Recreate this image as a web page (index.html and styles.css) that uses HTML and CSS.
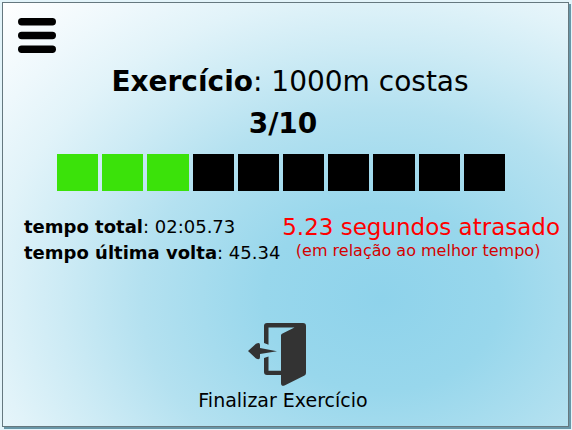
FILE: index.html
```html
<!DOCTYPE html>
<html lang="pt">
<head>
<meta charset="utf-8">
<meta name="viewport" content="width=device-width, initial-scale=1">
<title>Exercício</title>
<link rel="stylesheet" href="styles.css">
</head>
<body>
<main class="screen">
  <header class="toolbar">
    <button class="menu" type="button" aria-label="Menu">
      <svg width="38" height="35" viewBox="0 0 38 35" aria-hidden="true">
        <rect width="38" height="7.4" rx="3.7"/>
        <rect y="13.8" width="38" height="7.4" rx="3.7"/>
        <rect y="27.6" width="38" height="7.4" rx="3.7"/>
      </svg>
    </button>
  </header>
  <h1 class="title"><strong>Exercício</strong>: 1000m costas</h1>
  <p class="count">3/10</p>
  <div class="laps">
    <span class="lap done"></span>
    <span class="lap done"></span>
    <span class="lap done"></span>
    <span class="lap"></span>
    <span class="lap"></span>
    <span class="lap"></span>
    <span class="lap"></span>
    <span class="lap"></span>
    <span class="lap"></span>
    <span class="lap"></span>
  </div>
  <section class="stats">
    <div class="times">
      <p><strong>tempo total</strong>: 02:05.73</p>
      <p><strong>tempo última volta</strong>: 45.34</p>
    </div>
    <div class="delay">
      <p class="delay-value">5.23 segundos atrasado</p>
      <p class="delay-note">(em relação ao melhor tempo)</p>
    </div>
  </section>
  <button class="finish" type="button">
    <svg class="door" width="58" height="63" viewBox="0 0 58 63" aria-hidden="true">
      <path d="M16 20V3Q16 0 19 0H55Q58 0 58 3V50Q58 51.5 56.5 52.5L37 62.3Q33 64 33 60V52H19Q16 52 16 49V35L20.5 33.500V47.800H33V12.500Q33 11.300 34 10.700L46.500 4.500H20.500V21.700Z"/>
      <path d="M0 28L8 20.800Q12 18.500 12 22V25L29 28.300L12 31V34Q12 37.500 8 35.500Z"/>
    </svg>
    <span>Finalizar Exercício</span>
  </button>
</main>
</body>
</html>
```
FILE: styles.css
```css
* {
  box-sizing: border-box;
}

body {
  margin: 0;
  padding: 2px 3px 3px 2px;
  min-height: 100vh;
  display: flex;
  background: #e3f4fa;
  font-family: "DejaVu Sans", sans-serif;
  color: #000;
}

h1,
p {
  margin: 0;
}

button {
  padding: 0;
  border: 0;
  background: none;
  font: inherit;
  color: inherit;
  cursor: pointer;
}

svg {
  display: block;
}

.screen {
  flex: 1;
  display: flex;
  flex-direction: column;
  padding: 0 8px 12px 21px;
  border: 1px solid #65787f;
  box-shadow: 2px 2px 0 #6896a7;
  background: radial-gradient(ellipse farthest-corner at 67% 70%, #8fd3eb 0%, #98d7ec 22%, #b4e1f0 45%, #cdebf5 60%, #e1f3f9 73%, #eef8fc 84%, #fff 100%);
}

.toolbar {
  display: flex;
  height: 58px;
  margin-left: -6px;
  padding-top: 15px;
}

.menu {
  height: 35px;
}

.title,
.count {
  font-size: 28px;
  line-height: 42px;
  text-align: center;
}

.title {
  font-weight: normal;
  padding-right: 4px;
}

.count {
  font-weight: bold;
  padding-right: 18px;
}

.laps {
  display: grid;
  grid-template-columns: repeat(10, 1fr);
  gap: 4px;
  margin: 9px 55px 22px 33px;
}

.lap {
  height: 37px;
  background: #000;
}

.done {
  background: #3be20a;
}

.stats {
  display: flex;
  justify-content: space-between;
  white-space: nowrap;
}

.times {
  padding-top: 1px;
  font-size: 18px;
  line-height: 26px;
}

.delay {
  text-align: center;
}

.delay-value {
  color: #f00;
  font-size: 23px;
  line-height: 28px;
}

.delay-note {
  padding-right: 6px;
  color: #d40000;
  font-size: 16px;
  line-height: 20px;
}

.finish {
  display: flex;
  flex-direction: column;
  align-items: center;
  align-self: center;
  margin: auto 18px 0 0;
  font-size: 19px;
  line-height: 28px;
}

.door {
  margin-right: 12px;
  fill: #333;
}
```
